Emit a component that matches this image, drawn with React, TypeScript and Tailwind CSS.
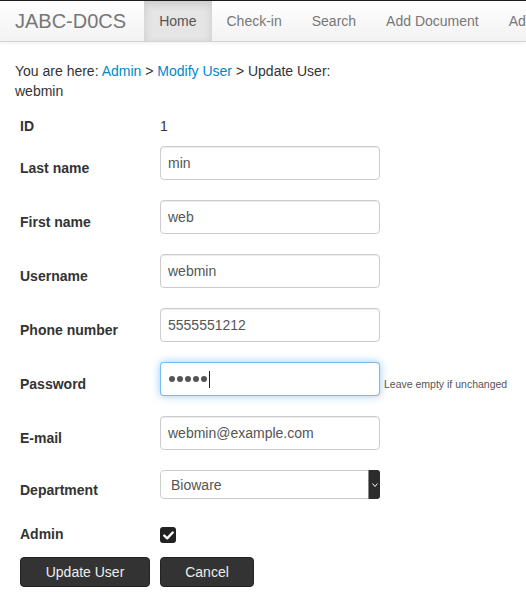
const navItems = ["Home", "Check-in", "Search", "Add Document", "Admin"];

function TextField({ value }: { value: string }) {
  return (
    <div className="w-[220px] shrink-0 h-[34px] px-[7px] flex items-center border border-[#cccccc] rounded-[4px] bg-white shadow-[inset_0_1px_1px_rgba(0,0,0,0.075)] text-[14px] text-[#555555]">
      {value}
    </div>
  );
}

function Row({ label, children }: { label: string; children: React.ReactNode }) {
  return (
    <div className="flex items-start mb-5">
      <div className="w-[140px] shrink-0 pt-[12px] font-bold text-[14px] leading-5">{label}</div>
      {children}
    </div>
  );
}

export default function App() {
  return (
    <div className="w-[526px] h-[599px] overflow-hidden bg-white text-[#333333] text-[14px] leading-5 font-['Liberation_Sans',Arial,sans-serif]">
      <div className="border-t border-[#1b1b1b] bg-gradient-to-b from-white to-[#f2f2f2] border-b border-b-[#d4d4d4] shadow-[0_1px_4px_rgba(0,0,0,0.065)]">
        <div className="flex items-stretch whitespace-nowrap">
          <div className="pl-[15px] pr-[18px] py-[10px] text-[20px] leading-5 text-[#777777]">JABC-D0CS</div>
          {navItems.map((item) =>
            item === "Home" ? (
              <div key={item} className="px-[15px] py-[10px] bg-[#e5e5e5] text-[#555555] shadow-[inset_0_3px_8px_rgba(0,0,0,0.125)]">
                {item}
              </div>
            ) : (
              <div key={item} className="px-[15px] py-[10px] text-[#777777]">
                {item}
              </div>
            )
          )}
        </div>
      </div>

      <div className="px-[15px] pt-[19px]">
        <div className="w-[360px]">
          You are here: <a className="text-[#0088cc]" href="#">Admin</a> &gt;{" "}
          <a className="text-[#0088cc]" href="#">Modify User</a> &gt; Update User: webmin
        </div>
      </div>

      <div className="px-5 pt-[15px]">
        <div className="flex mb-[10px]">
          <div className="w-[140px] font-bold">ID</div>
          <div>1</div>
        </div>
        <Row label="Last name">
          <TextField value="min" />
        </Row>
        <Row label="First name">
          <TextField value="web" />
        </Row>
        <Row label="Username">
          <TextField value="webmin" />
        </Row>
        <Row label="Phone number">
          <TextField value="5555551212" />
        </Row>
        <Row label="Password">
          <div className="w-[220px] shrink-0 h-[34px] px-[8px] flex items-center gap-[2px] border border-[rgba(82,168,236,0.8)] rounded-[4px] bg-white shadow-[0_0_8px_rgba(82,168,236,0.6)]">
            <span className="w-[6px] h-[6px] rounded-full bg-[#555555]" />
            <span className="w-[6px] h-[6px] rounded-full bg-[#555555]" />
            <span className="w-[6px] h-[6px] rounded-full bg-[#555555]" />
            <span className="w-[6px] h-[6px] rounded-full bg-[#555555]" />
            <span className="w-[6px] h-[6px] rounded-full bg-[#555555]" />
            <span className="w-px h-[17px] bg-[#222222]" />
          </div>
          <span className="ml-[4px] pt-[12px] whitespace-nowrap text-[10.5px] leading-5 text-[#555555]">Leave empty if unchanged</span>
        </Row>
        <Row label="E-mail">
          <TextField value="webmin@example.com" />
        </Row>
        <div className="flex items-start mb-[24px]">
          <div className="w-[140px] shrink-0 pt-[10px] font-bold">Department</div>
          <div className="w-[220px] h-[29px] flex items-stretch border border-[#cccccc] rounded-[4px] bg-white text-[#555555]">
            <div className="flex-1 pl-[10px] flex items-center">Bioware</div>
            <div className="w-[12px] mr-[-1px] my-[-1px] bg-[#2b2b2b] border-l border-[#888888] rounded-r-[3px] flex items-center justify-center">
              <svg width="6" height="4" viewBox="0 0 6 4">
                <path d="M0.5 0.5 L3 3.5 L5.5 0.5" fill="none" stroke="#ffffff" strokeWidth="1" />
              </svg>
            </div>
          </div>
        </div>
        <div className="flex items-start">
          <div className="w-[140px] shrink-0 font-bold">Admin</div>
          <div className="mt-[3px] w-[16px] h-[16px] rounded-[3px] bg-[#222222] flex items-center justify-center">
            <svg width="11" height="9" viewBox="0 0 11 9">
              <path d="M1.3 4.6 L4.2 7.3 L9.7 1.5" fill="none" stroke="#ffffff" strokeWidth="2.4" strokeLinecap="round" strokeLinejoin="round" />
            </svg>
          </div>
        </div>
        <div className="flex gap-[10px] mt-[13px]">
          <button className="w-[130px] h-[30px] rounded-[4px] bg-[#333333] border border-[#222222] text-[#eeeeee] text-[14px]">
            Update User
          </button>
          <button className="w-[94px] h-[30px] rounded-[4px] bg-[#333333] border border-[#222222] text-[#eeeeee] text-[14px]">
            Cancel
          </button>
        </div>
      </div>
    </div>
  );
}
